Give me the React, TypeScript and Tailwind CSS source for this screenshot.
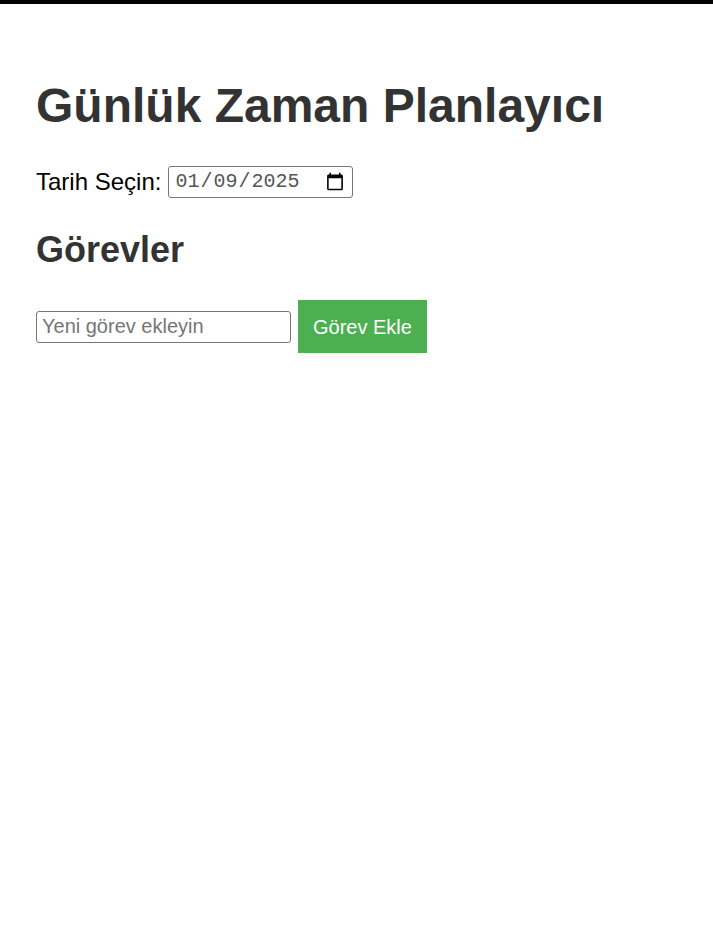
const App = () => {
  return (
    <div
      className="min-h-[947px] border-t-4 border-black bg-white px-9 pt-[74px] text-[#333]"
      style={{ fontFamily: '"Liberation Sans", Arial, sans-serif' }}
    >
      <h1 className="text-[48px] font-bold leading-[55px]">Günlük Zaman Planlayıcı</h1>

      <div className="mt-[31px] flex items-center gap-[7px] text-[24px] text-black">
        <label htmlFor="date">Tarih Seçin:</label>
        <input
          id="date"
          type="date"
          defaultValue="2025-01-09"
          className="h-[32px] w-[185px] rounded-[3px] border border-[#767676] px-[5px] text-[20px] font-light text-[#555]"
          style={{ fontFamily: '"Liberation Mono", "Courier New", monospace' }}
        />
      </div>

      <h2 className="mt-[29px] text-[36px] font-bold leading-[41px]">Görevler</h2>

      <div className="mt-[30px] flex items-center gap-[7px]">
        <input
          type="text"
          placeholder="Yeni görev ekleyin"
          className="h-[32px] w-[255px] rounded-[3px] border border-[#767676] px-[5px] text-[20px] text-black placeholder:text-[#757575]"
        />
        <button className="h-[53px] bg-[#4CAF50] px-[15px] text-[20px] text-white">
          Görev Ekle
        </button>
      </div>
    </div>
  );
};

export default App;
